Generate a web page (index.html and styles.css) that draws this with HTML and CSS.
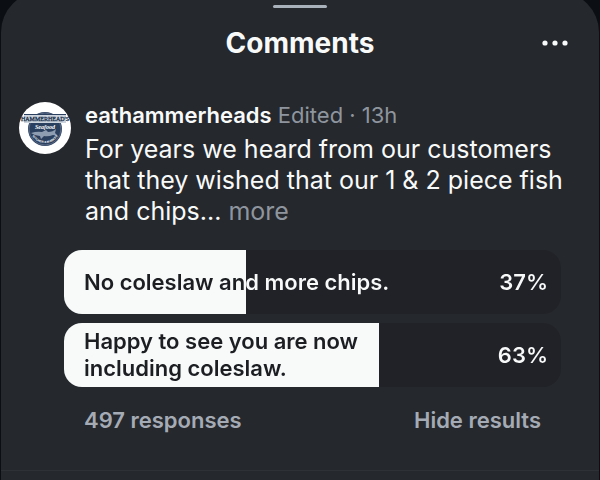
FILE: index.html
```html
<!DOCTYPE html>
<html lang="en">
<head>
    <meta charset="UTF-8">
    <meta name="viewport" content="width=device-width, initial-scale=1">
    <title>Comments</title>
    <link rel="stylesheet" href="styles.css">
</head>
<body>
    <main class="sheet">
        <div class="handle"></div>
        <header class="sheet-header">
            <h1>Comments</h1>
            <button class="menu-button" aria-label="More options">
                <svg width="26" height="6" viewBox="0 0 26 6" fill="currentColor">
                    <circle cx="3" cy="3" r="2.6"></circle>
                    <circle cx="13" cy="3" r="2.6"></circle>
                    <circle cx="23" cy="3" r="2.6"></circle>
                </svg>
            </button>
        </header>

        <article class="comment">
            <svg class="avatar" viewBox="0 0 52 52" role="img" aria-label="Hammerhead's Seafood logo">
                <defs>
                    <path id="badgeCurve" d="M11 26 A15 15 0 0 0 41 26"></path>
                </defs>
                <circle cx="26" cy="26" r="26" fill="#ffffff"></circle>
                <circle cx="26" cy="27" r="17" fill="#2b3f5f"></circle>
                <circle cx="26" cy="27" r="16" fill="none" stroke="#8795aa" stroke-width="0.5"></circle>
                <rect x="5" y="13" width="42" height="8" fill="#ccd3dc"></rect>
                <rect x="5" y="12" width="42" height="1" fill="#2b3f5f"></rect>
                <text class="logo-name" x="26" y="19" text-anchor="middle">HAMMERHEAD'S</text>
                <text class="logo-type" x="26" y="27" text-anchor="middle">Seafood</text>
                <path d="M12 31 Q18 29 23 30 L27 28 L29 30 Q34 30 37 27 L36 31 L39 34 L34 33 Q29 35 25 34 L22 37 L21 34 Q16 34 12 31 Z" fill="#8f9db2"></path>
                <text class="logo-ring"><textPath href="#badgeCurve" startOffset="50%" text-anchor="middle">KITCHEN &amp; MARKET</textPath></text>
            </svg>
            <div class="comment-body">
                <div class="comment-meta">
                    <a class="username" href="#">eathammerheads</a>
                    <span>Edited · 13h</span>
                </div>
                <p>For years we heard from our customers that they wished that our 1 &amp; 2 piece fish and chips... <a class="more" href="#">more</a></p>
            </div>
        </article>

        <section class="poll">
            <button class="option" style="--share: 36.6%">
                <span class="option-text">
                    <span class="label">No coleslaw and more chips.</span>
                    <span>37%</span>
                </span>
            </button>
            <button class="option" style="--share: 63.4%">
                <span class="option-text">
                    <span class="label">Happy to see you are now including coleslaw.</span>
                    <span>63%</span>
                </span>
            </button>
            <div class="poll-footer">
                <span>497 responses</span>
                <button class="hide-results">Hide results</button>
            </div>
        </section>
    </main>
</body>
</html>
```
FILE: styles.css
```css
* {
    box-sizing: border-box;
}

body {
    margin: 0;
    background-color: #0b0e13;
    color: #f8fafa;
    font-family: Inter, "Liberation Sans", sans-serif;
}

h1,
p {
    margin: 0;
}

a {
    color: inherit;
    text-decoration: none;
}

button {
    padding: 0;
    border: none;
    background: none;
    color: inherit;
    font: inherit;
    cursor: pointer;
}

.sheet {
    min-height: calc(100vh + 8px);
    margin: -8px 1px 0;
    padding-top: 13px;
    border-radius: 40px 40px 0 0;
    background-color: #25282d;
}

.handle {
    width: 54px;
    height: 3px;
    margin: 0 auto;
    border-radius: 2px;
    background-color: #a9b1bb;
}

.sheet-header {
    display: grid;
    grid-template-columns: 1fr auto 1fr;
    align-items: center;
    padding: 16px 31px 0;
}

.sheet-header h1 {
    grid-column: 2;
    font-size: 28px;
    line-height: 38px;
    font-weight: 700;
}

.menu-button {
    justify-self: end;
    display: flex;
    padding: 8px 0;
}

.comment {
    display: flex;
    gap: 14px;
    padding: 40px 32px 0 18px;
}

.avatar {
    flex: none;
    width: 52px;
    height: 52px;
}

.logo-name {
    font: 6px "Liberation Serif", serif;
    fill: #22344f;
    stroke: #22344f;
    stroke-width: 0.3px;
}

.logo-type {
    font: italic bold 6px "Liberation Serif", serif;
    fill: #ffffff;
}

.logo-ring {
    font: bold 3px "Liberation Sans", sans-serif;
    fill: #ffffff;
}

.comment-meta {
    font-size: 22px;
    line-height: 27px;
    color: #8f959e;
}

.username {
    font-weight: 600;
    color: #f8fafa;
}

.comment p {
    margin-top: 5px;
    font-size: 25px;
    line-height: 31px;
}

.more {
    color: #8f959e;
}

.poll {
    display: flex;
    flex-direction: column;
    gap: 9px;
    padding: 23px 38px 26px 63px;
    border-bottom: 1px solid #2e3136;
}

.option {
    overflow: hidden;
    border-radius: 18px;
    background: linear-gradient(to right, #f7faf9 var(--share), #212227 var(--share));
    text-align: left;
}

/* label colour flips where the result bar ends */
.option-text {
    display: flex;
    align-items: center;
    justify-content: space-between;
    gap: 16px;
    min-height: 64px;
    padding: 5px 13px 5px 20px;
    background: linear-gradient(to right, #1c1e22 var(--share), #f8fafa var(--share));
    background-clip: text;
    -webkit-background-clip: text;
    color: transparent;
    font-size: 22px;
    line-height: 27px;
    font-weight: 600;
}

.label {
    max-width: 320px;
}

.poll-footer {
    display: flex;
    justify-content: space-between;
    padding: 10px 20px;
    color: #a5abb5;
    font-size: 22px;
    line-height: 28px;
    font-weight: 600;
}
```
